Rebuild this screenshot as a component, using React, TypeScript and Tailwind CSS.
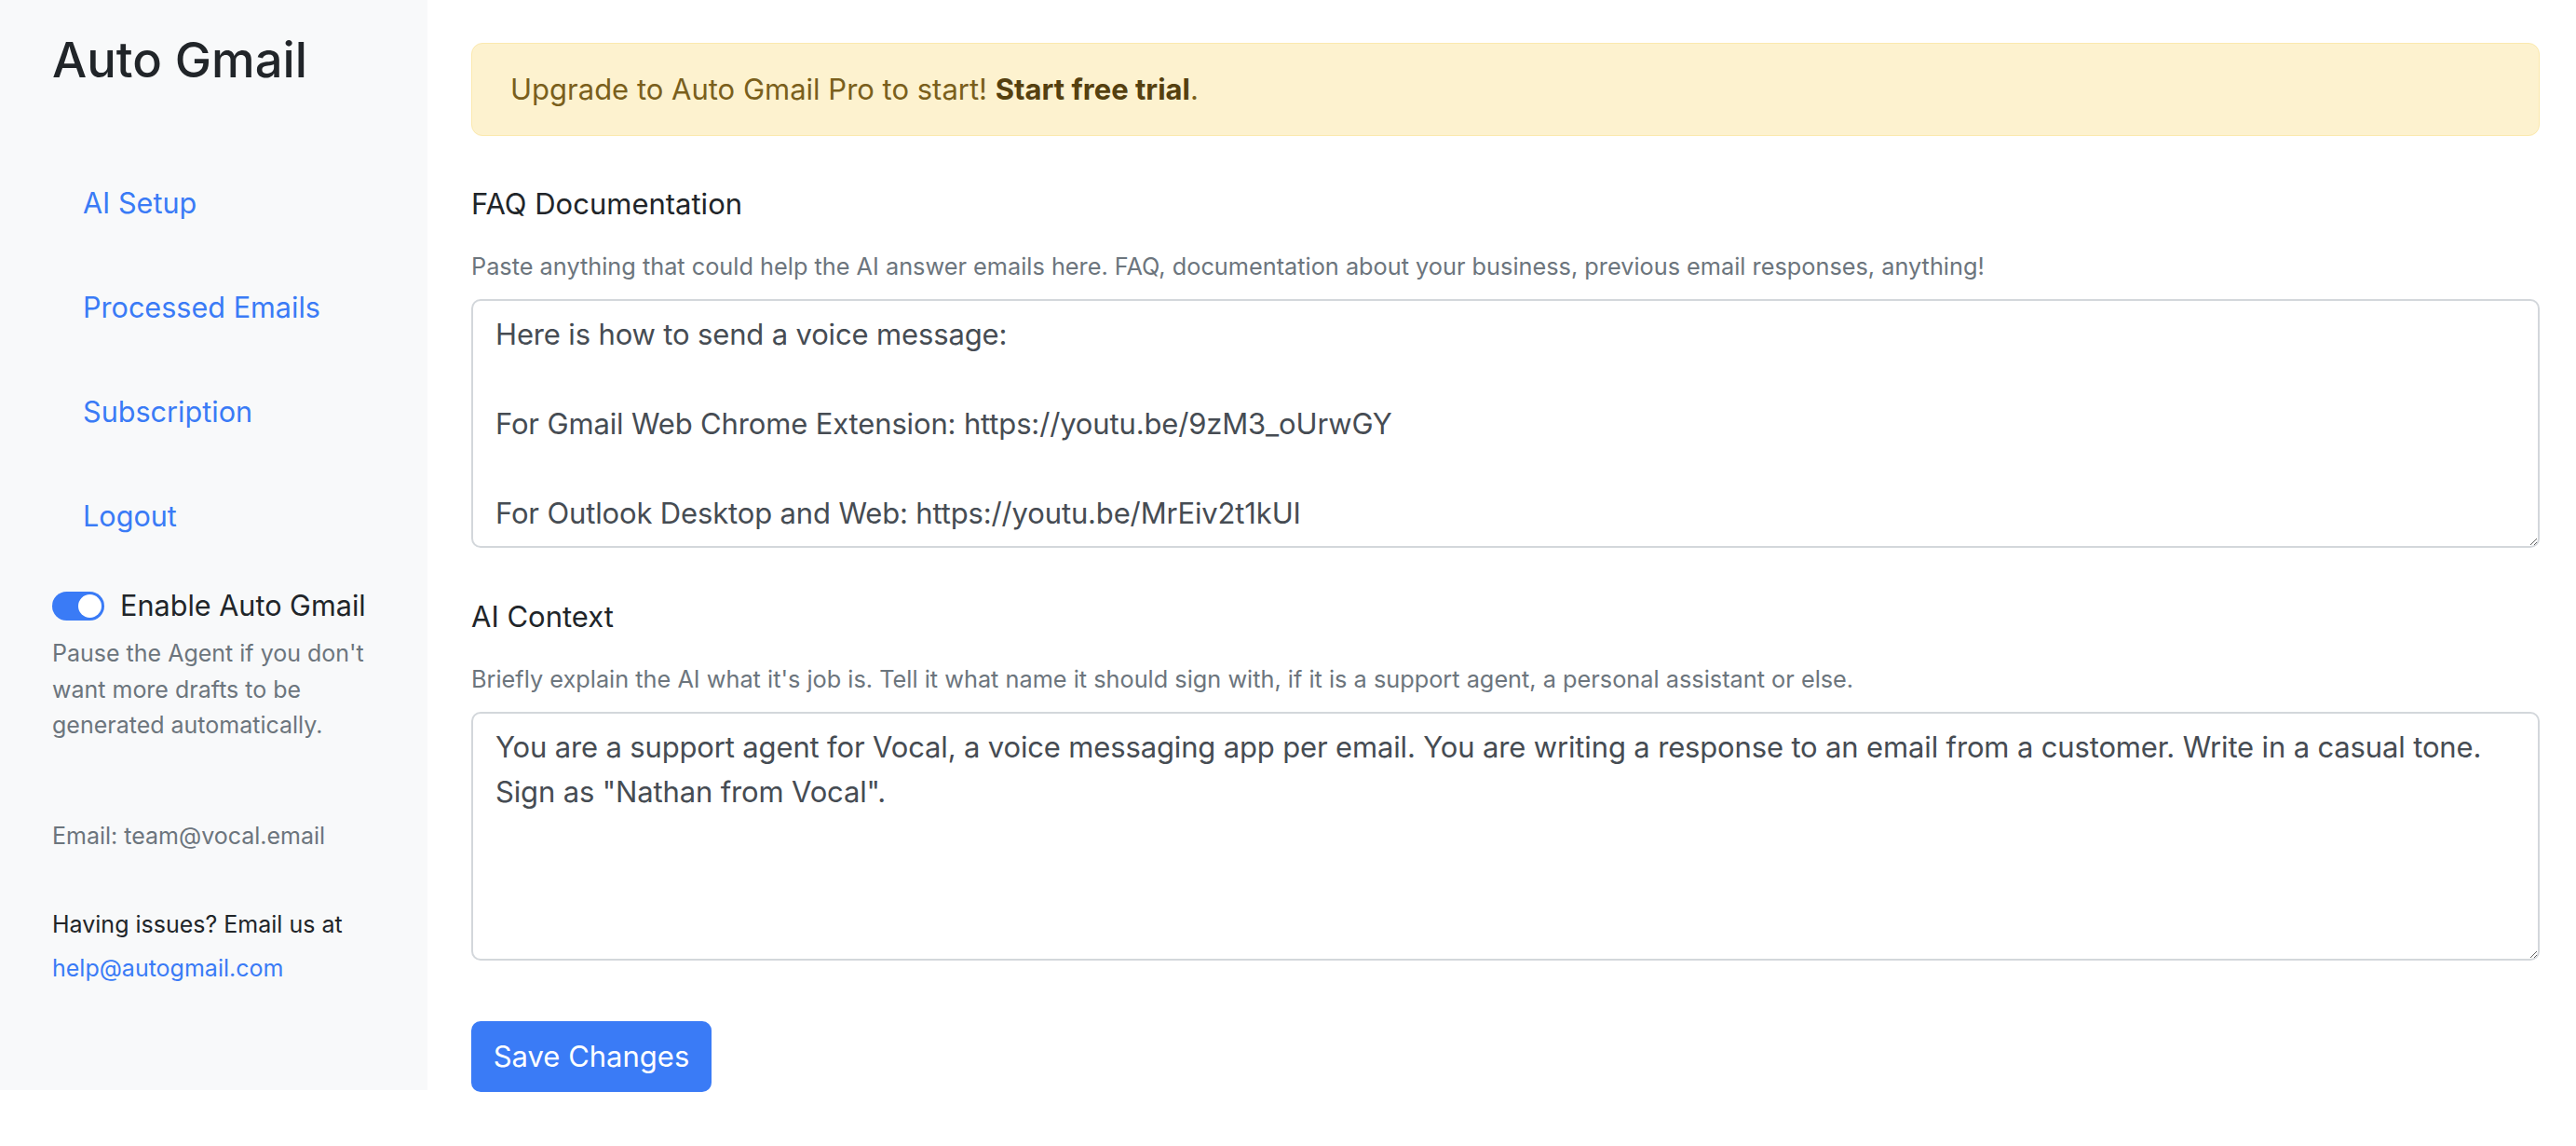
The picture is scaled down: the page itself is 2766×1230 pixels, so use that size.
import React from "react";

const faqText = `Here is how to send a voice message:

For Gmail Web Chrome Extension: https://youtu.be/9zM3_oUrwGY

For Outlook Desktop and Web: https://youtu.be/MrEiv2t1kUI`;

const contextText = `You are a support agent for Vocal, a voice messaging app per email. You are writing a response to an email from a customer. Write in a casual tone. Sign as "Nathan from Vocal".`;

function Sidebar() {
  const links = ["AI Setup", "Processed Emails", "Subscription", "Logout"];
  return (
    <aside className="w-[459px] h-[1170px] shrink-0 bg-[#f8f9fa] px-[56px] pt-[32px]">
      <h1 className="text-[52.5px] leading-[65px] font-medium text-[#212529]">Auto Gmail</h1>
      <nav className="mt-[65px] flex flex-col">
        {links.map((l) => (
          <a key={l} href="#" className="block px-[33px] py-[33px] text-[30.6px] leading-[46px] text-[#3a7bf6]">
            {l}
          </a>
        ))}
      </nav>
      <div className="mt-[17px] flex items-center gap-[17px]">
        <div className="relative h-[31px] w-[56px] rounded-full bg-[#3a7bf6]">
          <div className="absolute right-[3px] top-[3px] h-[25px] w-[25px] rounded-full bg-white" />
        </div>
        <span className="text-[30.6px] leading-[46px] text-[#212529]">Enable Auto Gmail</span>
      </div>
      <p className="mt-[9px] text-[25px] leading-[38.5px] text-[#6c757d]">
        Pause the Agent if you don't
        <br />
        want more drafts to be
        <br />
        generated automatically.
      </p>
      <p className="mt-[80px] text-[25px] leading-[38.5px] text-[#6c757d]">Email: team@vocal.email</p>
      <p className="mt-[57px] text-[25px] leading-[38.5px] text-[#212529]">Having issues? Email us at</p>
      <a href="#" className="mt-[8px] block text-[25px] leading-[38.5px] text-[#3a7bf6]">help@autogmail.com</a>
    </aside>
  );
}

function Field({ label, help, value }: { label: string; help: string; value: string }) {
  return (
    <div>
      <label className="block text-[31px] leading-[46px] text-[#212529]">{label}</label>
      <p className="mt-[25px] text-[25.3px] leading-[38px] text-[#6c757d]">{help}</p>
      <textarea
        readOnly
        defaultValue={value}
        className="mt-[16px] block h-[267px] w-full rounded-[10px] border-2 border-[#d3d7db] bg-white px-[24px] pt-[12px] text-[31px] leading-[48px] tracking-[-0.15px] text-[#464c53] outline-none"
      />
    </div>
  );
}

export default function App() {
  return (
    <div className="flex min-h-[1230px] w-full bg-white font-[Inter,'Noto_Sans',sans-serif]">
      <Sidebar />
      <main className="flex-1 pl-[47px] pr-[39px] pt-[46px]">
        <div className="rounded-[12px] border border-[#fbe9ae] bg-[#fdf2cf] px-[41px] py-[26px] text-[31px] leading-[46px] text-[#7a5f1c]">
          Upgrade to Auto Gmail Pro to start! <b className="font-bold text-[#55400f]">Start free trial</b>.
        </div>
        <div className="mt-[50px]">
          <Field
            label="FAQ Documentation"
            help="Paste anything that could help the AI answer emails here. FAQ, documentation about your business, previous email responses, anything!"
            value={faqText}
          />
        </div>
        <div className="mt-[51px]">
          <Field
            label="AI Context"
            help="Briefly explain the AI what it's job is. Tell it what name it should sign with, if it is a support agent, a personal assistant or else."
            value={contextText}
          />
        </div>
        <button className="mt-[65px] flex h-[76px] w-[258px] items-center justify-center rounded-[10px] bg-[#3a7bf6] text-[31px] text-white">
          Save Changes
        </button>
      </main>
    </div>
  );
}
